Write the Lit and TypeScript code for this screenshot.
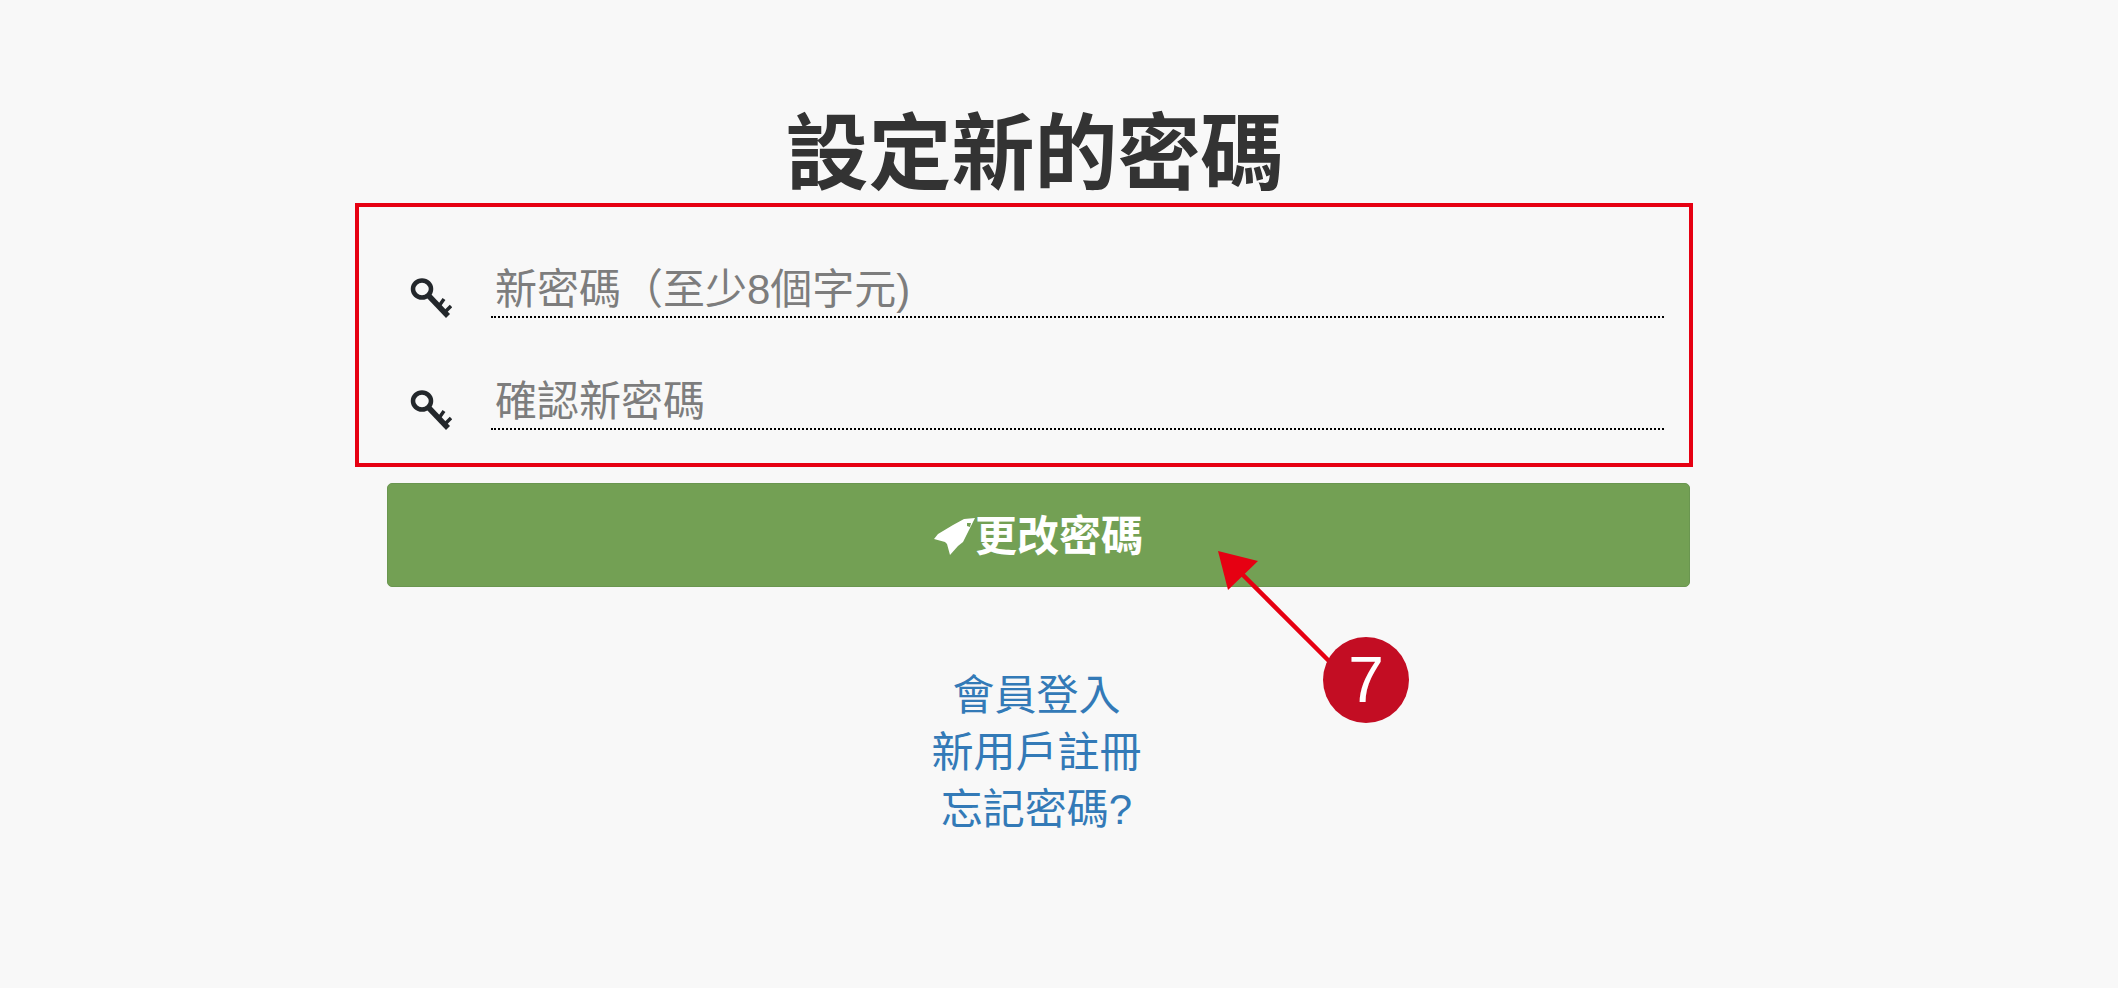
import { LitElement, html, css } from "lit";
import { customElement } from "lit/decorators.js";

const key = html`<svg class="key" viewBox="0 0 42 40" aria-hidden="true">
  <ellipse cx="12" cy="11" rx="9" ry="8.5" fill="none" stroke="#23272b" stroke-width="4.5"/>
  <path d="M18 17 L38 38" stroke="#23272b" stroke-width="5.5" fill="none"/>
  <path d="M29 28 L34 21 M35 34 L41 28" stroke="#23272b" stroke-width="3.5" fill="none"/>
</svg>`;

@customElement("app-root")
export class AppRoot extends LitElement {
  static styles = css`
    :host {
      display: block;
      position: relative;
      width: 2118px;
      height: 988px;
      background: #f8f8f8;
      overflow: hidden;
      font-family: "Liberation Sans", "Noto Sans CJK TC", sans-serif;
    }
    .page {
      width: 1303px;
      margin-left: 387px;
      padding-top: 106px;
      display: flex;
      flex-direction: column;
    }
    h1 {
      margin: 0 8px 0 0;
      height: 97px;
      font-size: 83px;
      line-height: 97px;
      font-weight: 700;
      color: #333;
      text-align: center;
    }
    .fields {
      display: flex;
      flex-direction: column;
      gap: 60px;
      padding: 63px 26px 0 23px;
    }
    .field {
      display: flex;
      align-items: flex-end;
      height: 52px;
    }
    .key {
      width: 42px;
      height: 40px;
      margin-right: 39px;
      flex: none;
    }
    input {
      flex: 1;
      min-width: 0;
      height: 52px;
      box-sizing: border-box;
      padding: 0 0 2px 4px;
      border: 0;
      border-bottom: 2px dotted #000;
      background: transparent;
      font: 400 42px/48px "Liberation Sans", "Noto Sans CJK TC", sans-serif;
      outline: none;
    }
    input::placeholder {
      color: #7d7d7d;
      opacity: 1;
    }
    .submit {
      margin-top: 53px;
      height: 104px;
      border: 1px solid #6a9650;
      border-radius: 5px;
      background: #73a054;
      color: #fff;
      font: 700 42px/1 "Liberation Sans", "Noto Sans CJK TC", sans-serif;
      display: flex;
      align-items: center;
      justify-content: center;
      padding: 3px 0 0 0;
      box-sizing: border-box;
    }
    .rocket {
      width: 41px;
      height: 39px;
      flex: none;
    }
    .links {
      margin-top: 80px;
      display: flex;
      flex-direction: column;
      align-items: center;
      font-size: 42px;
      line-height: 57px;
      padding-right: 4px;
    }
    .links a {
      color: #337ab7;
      text-decoration: none;
    }
    .frame {
      position: absolute;
      left: 355px;
      top: 203px;
      width: 1338px;
      height: 264px;
      box-sizing: border-box;
      border: 4px solid #e60012;
      pointer-events: none;
    }
    .arrow {
      position: absolute;
      left: 0;
      top: 0;
      width: 2118px;
      height: 988px;
      pointer-events: none;
    }
    .badge {
      position: absolute;
      left: 1323px;
      top: 637px;
      width: 86px;
      height: 86px;
      border-radius: 50%;
      background: #c30d23;
      color: #fff;
      font-size: 64px;
      line-height: 86px;
      text-align: center;
    }
  `;

  render() {
    return html`
      <main class="page">
        <h1>設定新的密碼</h1>
        <div class="fields">
          <label class="field">${key}<input type="password" placeholder="新密碼（至少8個字元)" /></label>
          <label class="field">${key}<input type="password" placeholder="確認新密碼" /></label>
        </div>
        <div class="submit">
          <svg class="rocket" viewBox="0 0 41 39" aria-hidden="true">
            <path fill="#fff" fill-rule="evenodd" d="M41 1 L30 2 L19 8 L4 17 L0 22 L11 25 L13 27 L16 38 L24 29 L29 25 L35 13 Z M33 6 L37 6 L36 10 L33 9 Z"/>
          </svg>
          <span>更改密碼</span>
        </div>
        <nav class="links">
          <a href="#">會員登入</a>
          <a href="#">新用戶註冊</a>
          <a href="#">忘記密碼?</a>
        </nav>
      </main>
      <div class="frame"></div>
      <svg class="arrow" viewBox="0 0 2118 988" aria-hidden="true">
        <path d="M1330 662 L1240 572" stroke="#e60012" stroke-width="4.5" fill="none"/>
        <polygon points="1218,551 1258,561 1228,590" fill="#e60012"/>
      </svg>
      <div class="badge">7</div>
    `;
  }
}
